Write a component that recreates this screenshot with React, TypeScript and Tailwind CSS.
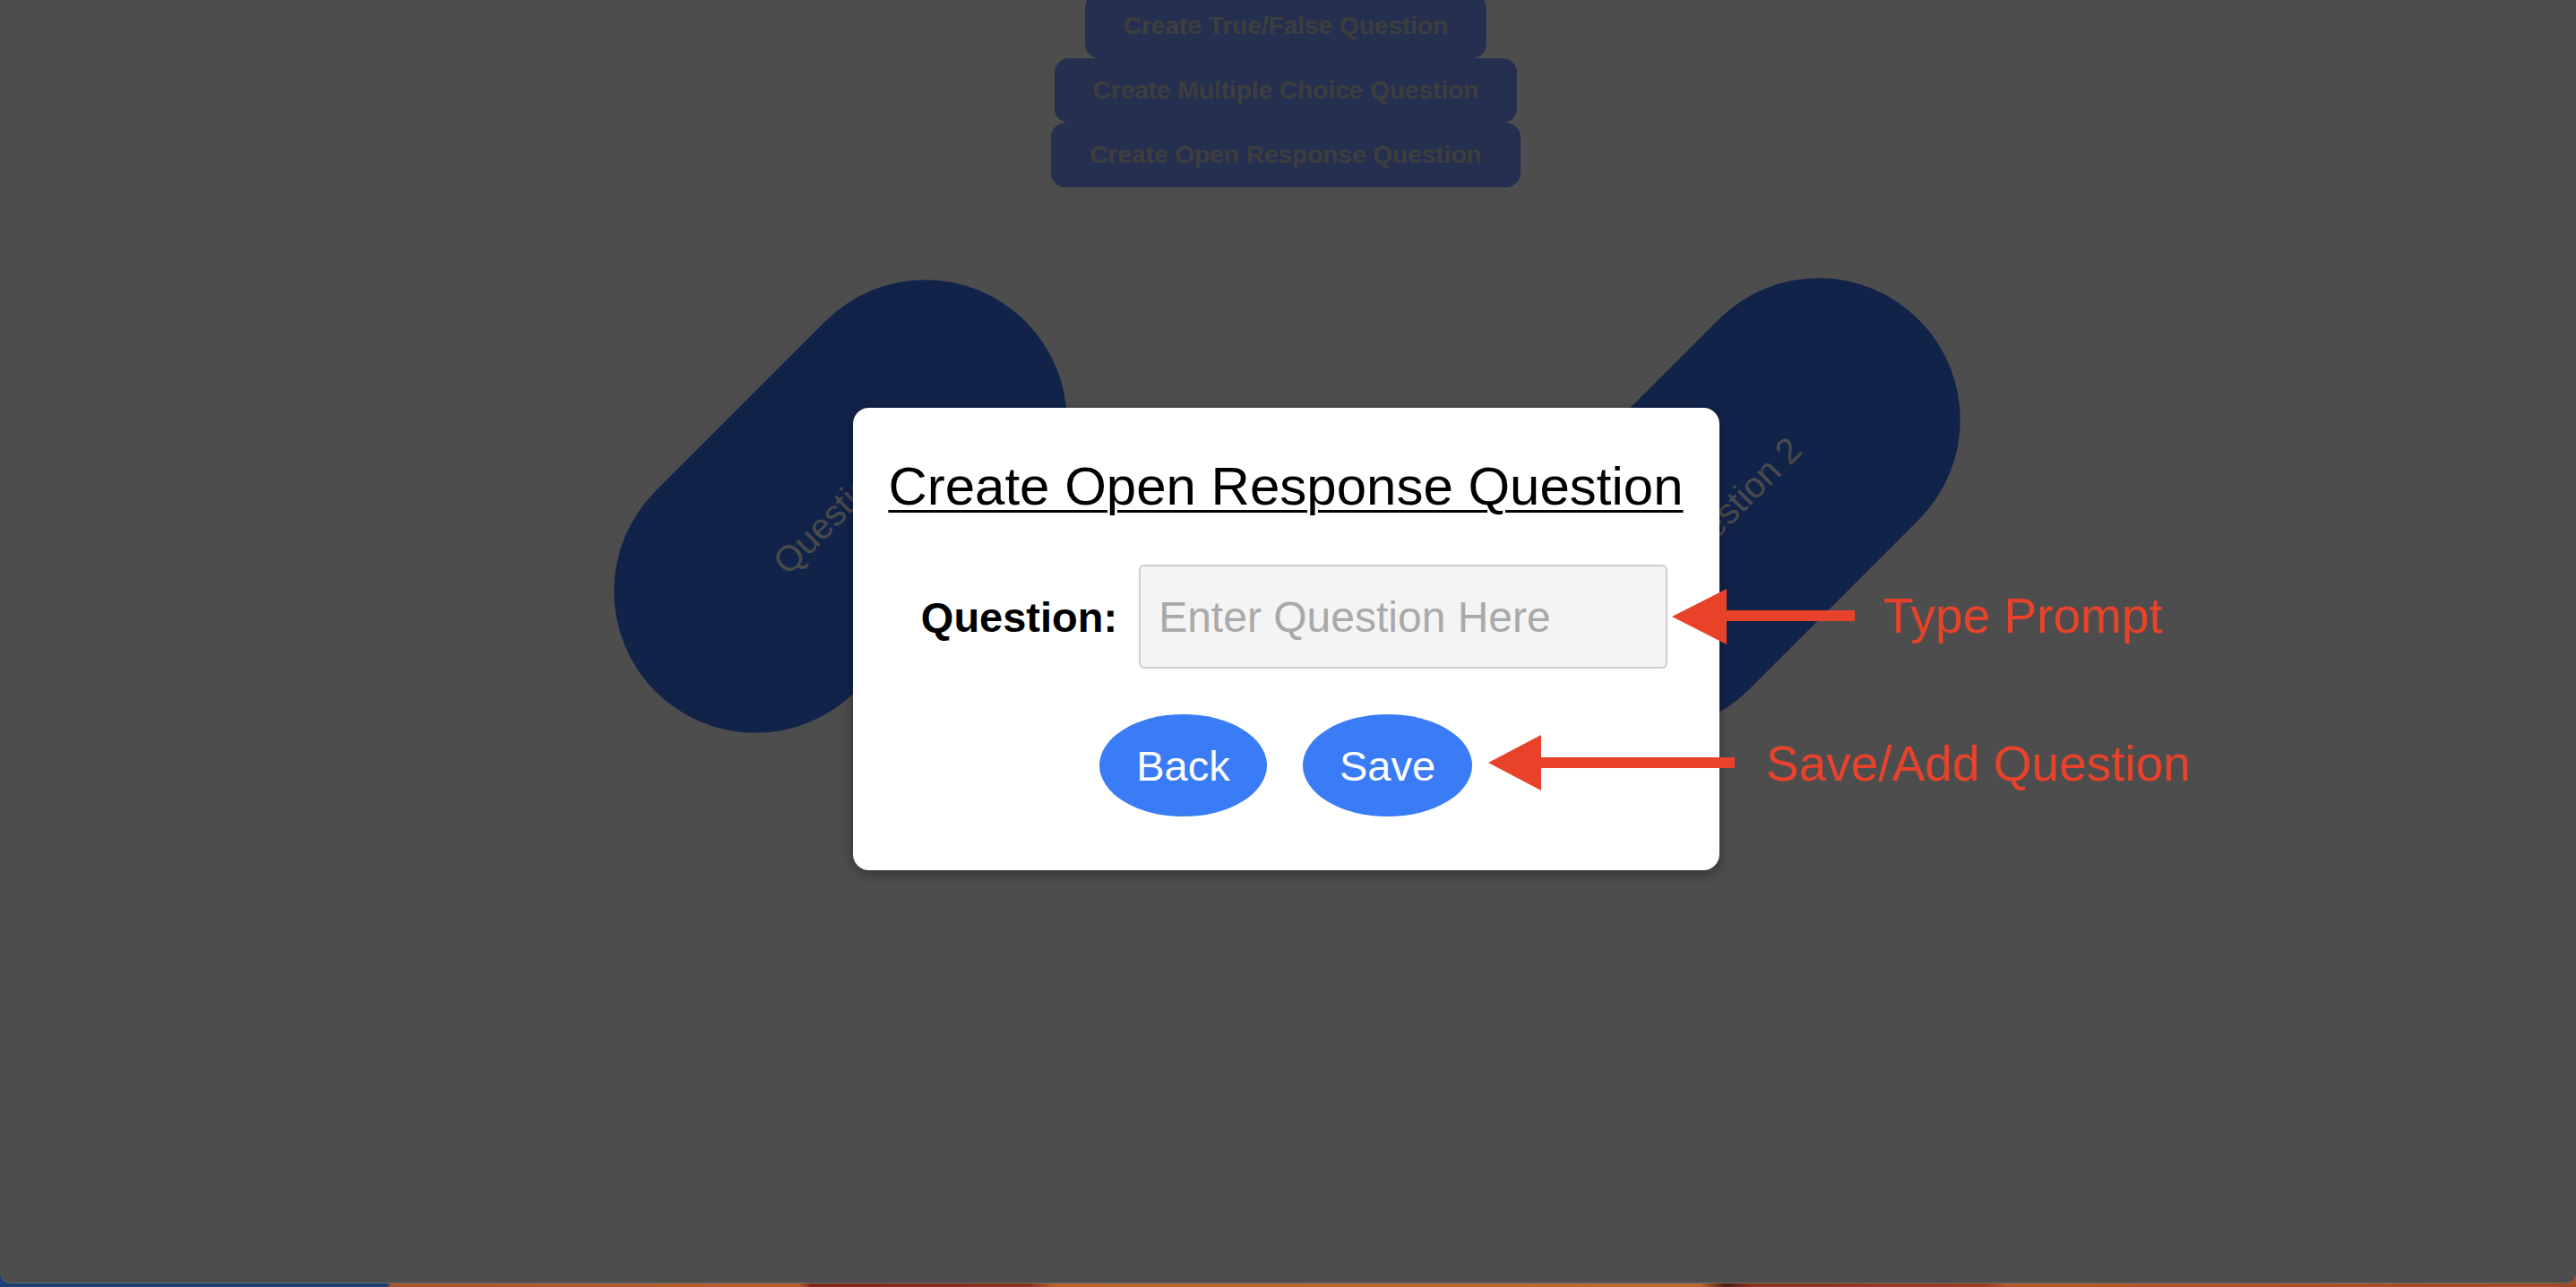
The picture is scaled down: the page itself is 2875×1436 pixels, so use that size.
import React from 'react';

const font = "font-['Liberation_Sans',Arial,Helvetica,sans-serif]";

const questionTypes = [
  'Create True/False Question',
  'Create Multiple Choice Question',
  'Create Open Response Question',
];

const Pill = ({ label, className = '' }: { label: string; className?: string }) => (
  <div
    className={`absolute w-[584px] h-[316px] rounded-full bg-[#12234a] -rotate-45 flex items-center justify-center text-[40px] text-[#4a4a4a] ${className}`}
  >
    {label}
  </div>
);

export default function App() {
  return (
    <div
      className={`${font} w-full h-[1436px] overflow-hidden bg-[linear-gradient(90deg,#1e3f70_0%,#1e3f70_15%,#a8552c_15.2%,#b35f30_31%,#7a2a18_31.5%,#8a3320_40%,#b8652f_41%,#b86a35_66%,#4a1a10_67%,#8a3520_68%,#993d22_77%,#b05a2c_78%,#a04a26_100%)]`}
    >
      <div className="relative h-[1432px] bg-[#4d4d4d] rounded-b-[12px] overflow-hidden border-b border-[#6a6a6a]">
        {/* question type buttons */}
        <div className="flex flex-col items-center -mt-[7px] pr-[5px]">
          {questionTypes.map((t) => (
            <button
              key={t}
              className="h-[72px] px-[43px] rounded-[16px] bg-[#253050] text-[#3e3e3e] text-[28px] font-bold leading-none"
            >
              {t}
            </button>
          ))}
        </div>

        {/* question pills */}
        <Pill label="Question 1" className="left-[646px] top-[407px]" />
        <Pill label="Question 2" className="left-[1643px] top-[405px]" />

        {/* modal */}
        <div className="absolute inset-0 flex justify-center items-start pt-[455px] pr-[5px]">
          <div className="w-[967px] bg-white rounded-[18px] shadow-[0_4px_14px_rgba(0,0,0,0.35)] flex flex-col items-center pt-[53px] pb-[60px]">
            <h2 className="text-[60px] leading-[69px] text-black underline underline-offset-[6px] decoration-[3px]">
              Create Open Response Question
            </h2>
            <div className="mt-[53px] ml-[19px] flex items-center gap-[24px]">
              <label className="text-[47px] font-bold text-black leading-none">Question:</label>
              <input
                type="text"
                placeholder="Enter Question Here"
                className="w-[590px] h-[116px] rounded-[6px] border-2 border-[#cdcdcd] bg-[#f4f4f4] pl-[20px] text-[48px] text-black placeholder:text-[#a9a9a9] outline-none"
              />
            </div>
            <div className="mt-[51px] flex gap-[40px]">
              <button className="w-[187px] h-[114px] rounded-[50%] bg-[#3a7cf5] text-white text-[47px] leading-none">
                Back
              </button>
              <button className="w-[189px] h-[114px] rounded-[50%] bg-[#3a7cf5] text-white text-[47px] leading-none">
                Save
              </button>
            </div>
          </div>
        </div>

        {/* annotations */}
        <svg className="absolute left-0 top-0" width="2875" height="1432" viewBox="0 0 2875 1432">
          <polygon points="1866,688 1927,657 1927,719" fill="#e8432a" />
          <rect x="1920" y="681" width="150" height="12" fill="#e8432a" />
          <polygon points="1661,851 1720,820 1720,882" fill="#e8432a" />
          <rect x="1714" y="845" width="222" height="12" fill="#e8432a" />
        </svg>
        <div className="absolute left-[2102px] top-[660px] text-[55px] leading-[55px] text-[#e8432a]">Type Prompt</div>
        <div className="absolute left-[1971px] top-[825px] text-[55px] leading-[55px] text-[#e8432a]">Save/Add Question</div>
      </div>
    </div>
  );
}
